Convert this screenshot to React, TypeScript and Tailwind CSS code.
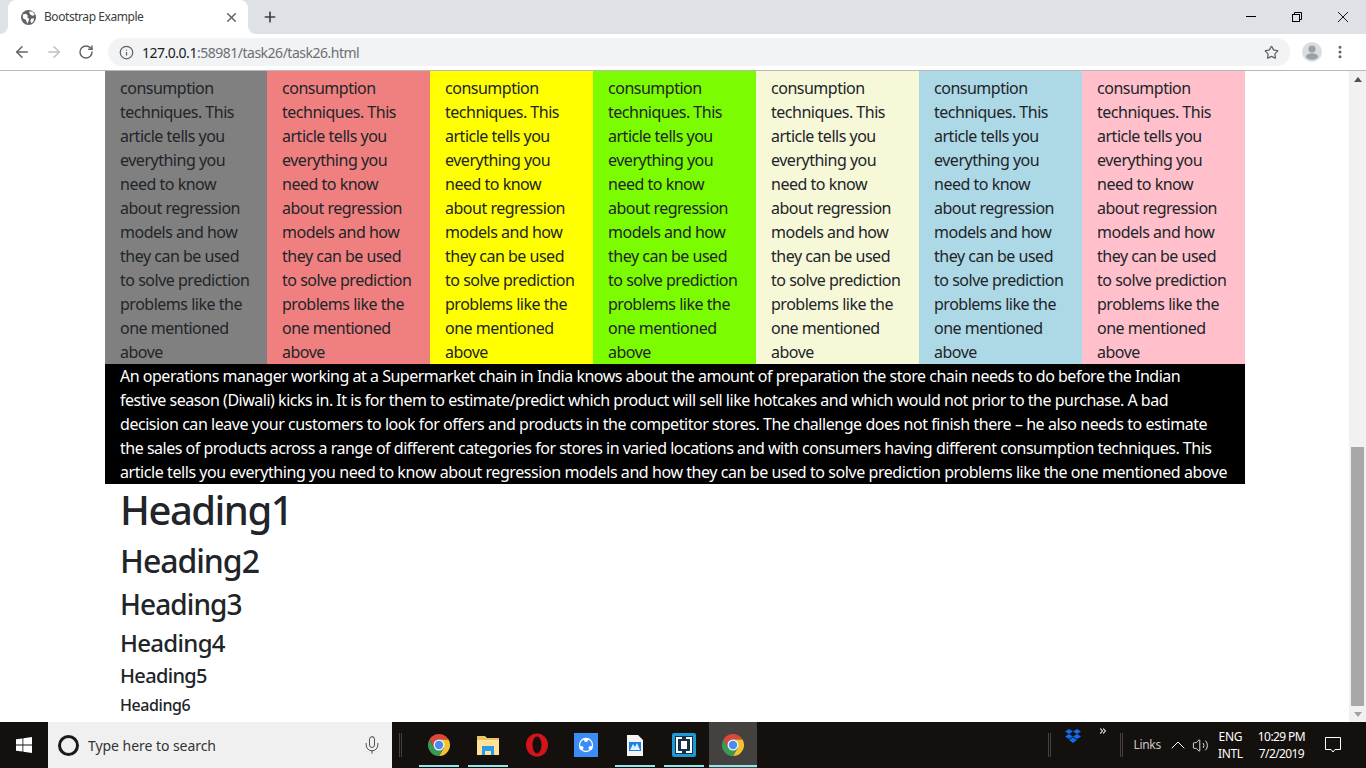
import React from 'react';
import { ArrowLeft, ArrowRight, RotateCw, Info, Star, Plus, X, MoreVertical, Mic, ChevronUp, Volume2, ChevronsRight } from 'lucide-react';

const columnLines = [
  'consumption',
  'techniques. This',
  'article tells you',
  'everything you',
  'need to know',
  'about regression',
  'models and how',
  'they can be used',
  'to solve prediction',
  'problems like the',
  'one mentioned',
  'above',
];

const columnColors = [
  'bg-[#808080] w-[162px]',
  'bg-[#f08080] w-[163px]',
  'bg-[#ffff00] w-[163px]',
  'bg-[#7cfc00] w-[163px]',
  'bg-[#f7f8d8] w-[163px]',
  'bg-[#add8e6] w-[163px]',
  'bg-[#ffc0cb] w-[163px]',
];

// each line gets its own tracking so the line ends land where they do in the picture
const blackLines = [
  { text: 'An operations manager working at a Supermarket chain in India knows about the amount of preparation the store chain needs to do before the Indian', track: 'tracking-[-0.49px]' },
  { text: 'festive season (Diwali) kicks in. It is for them to estimate/predict which product will sell like hotcakes and which would not prior to the purchase. A bad', track: 'tracking-[-0.49px]' },
  { text: 'decision can leave your customers to look for offers and products in the competitor stores. The challenge does not finish there – he also needs to estimate', track: 'tracking-[-0.45px]' },
  { text: 'the sales of products across a range of different categories for stores in varied locations and with consumers having different consumption techniques. This', track: 'tracking-[-0.49px]' },
  { text: 'article tells you everything you need to know about regression models and how they can be used to solve prediction problems like the one mentioned above', track: 'tracking-[-0.43px]' },
];

function ChromeLogo() {
  return (
    <svg width="24" height="24" viewBox="0 0 24 24">
      <path d="M21.53 6.5A11 11 0 0 0 2.47 6.5L7.24 14.75 12 6.5z" fill="#d9483b" />
      <path d="M21.53 6.5A11 11 0 0 1 12 23l4.76-8.25L12 6.5z" fill="#f2c230" />
      <path d="M12 23A11 11 0 0 1 2.47 6.5l4.77 8.25h9.52z" fill="#3a9a55" />
      <circle cx="12" cy="12" r="5.5" fill="#f4f4f4" />
      <circle cx="12" cy="12" r="4.2" fill="#4b8bf0" />
    </svg>
  );
}

function TaskbarSlot({ active, lit, children }: { active?: boolean; lit?: boolean; children: React.ReactNode }) {
  return (
    <div className={`relative flex h-[46px] items-center justify-center ${active ? '-ml-[4px] w-[48px] bg-[#45413e]' : 'w-[40px]'}`}>
      {children}
      {lit && <div className="absolute bottom-[1px] left-0 right-0 h-[2px] bg-[#8fe8ee]" />}
    </div>
  );
}

export default function App() {
  return (
    <div className="flex h-[768px] w-[1366px] flex-col overflow-hidden bg-white font-['Noto_Sans',sans-serif]">
      {/* tab strip */}
      <div className="flex h-[34px] items-end bg-[#dee1e6]">
        <div className="relative ml-[8px] flex h-[34px] w-[240px] items-center rounded-t-[8px] bg-white pl-[13px] pr-[9px]">
          <div className="absolute bottom-0 -left-[8px] h-[8px] w-[8px] bg-white">
            <div className="h-full w-full rounded-br-[8px] bg-[#dee1e6]" />
          </div>
          <div className="absolute bottom-0 -right-[8px] h-[8px] w-[8px] bg-white">
            <div className="h-full w-full rounded-bl-[8px] bg-[#dee1e6]" />
          </div>
          <svg width="15" height="15" viewBox="0 0 24 24" className="shrink-0">
            <circle cx="12" cy="12" r="12" fill="#5f6368" />
            <path d="M3 7l5-1 3 3-1 3 3 2-1 4-2 4-2-6-5-3zM14 2l5 1 3 5-4 1-3-2-2-3zM16 14l5-1-1 5-3 3-2-3z" fill="#fff" />
          </svg>
          <span className="ml-[8px] flex-1 whitespace-nowrap text-[12px] tracking-[-0.44px] text-[#3c4043]">Bootstrap Example</span>
          <X size={15} strokeWidth={2.4} className="text-[#5f6368]" />
        </div>
        <div className="ml-[14px] flex h-[34px] items-center">
          <Plus size={16} strokeWidth={2.5} className="text-[#3c4043]" />
        </div>
        <div className="flex-1" />
        <div className="flex h-[34px] items-center">
          <div className="flex w-[46px] justify-center">
            <svg width="10" height="10" viewBox="0 0 10 10" stroke="#000"><path d="M0 4.5h10" /></svg>
          </div>
          <div className="flex w-[46px] justify-center">
            <svg width="10" height="10" viewBox="0 0 10 10" fill="none" stroke="#000">
              <rect x="0.5" y="2.5" width="7" height="7" />
              <path d="M2.5 2.5V0.5h7v7H7.5" />
            </svg>
          </div>
          <div className="flex w-[46px] justify-center">
            <svg width="10" height="10" viewBox="0 0 10 10" stroke="#000" strokeWidth="0.9"><path d="M0 0l10 10M10 0L0 10" /></svg>
          </div>
        </div>
      </div>
      {/* toolbar */}
      <div className="flex h-[37px] items-center border-b border-[#b8b8b8] bg-white">
        <ArrowLeft size={18} strokeWidth={2} className="ml-[13px] text-[#5f6368]" />
        <ArrowRight size={18} strokeWidth={2} className="ml-[14px] text-[#bdc1c6]" />
        <RotateCw size={16} strokeWidth={2.2} className="ml-[15px] text-[#5f6368]" />
        <div className="ml-[14px] flex h-[28px] w-[1182px] items-center rounded-full bg-[#f1f3f4] pl-[11px] pr-[11px]">
          <Info size={15} strokeWidth={2} className="text-[#5f6368]" />
          <span className="ml-[8px] flex-1 whitespace-nowrap text-[14px] tracking-[-0.49px] text-[#6b6f74]">
            <span className="text-[#202124]">127.0.0.1</span>:58981/task26/task26.html
          </span>
          <Star size={15} strokeWidth={2} className="text-[#5f6368]" />
        </div>
        <div className="ml-[12px] flex h-[20px] w-[20px] items-center justify-center overflow-hidden rounded-full bg-[#dadce0]">
          <svg width="20" height="20" viewBox="0 0 20 20" fill="#9aa0a6">
            <circle cx="10" cy="7" r="3.5" />
            <ellipse cx="10" cy="14.5" rx="6" ry="3.2" />
          </svg>
        </div>
        <MoreVertical size={16} strokeWidth={2.5} className="ml-[10px] text-[#5f6368]" />
      </div>

      {/* page */}
      <div className="flex h-[651px] overflow-hidden">
        <div className="flex-1 overflow-hidden">
          <div className="mx-[105px] w-[1140px] text-[16px] leading-[24px] tracking-[-0.49px] text-[#212529]">
            <div className="flex h-[293px]">
              {columnColors.map((color) => (
                <div key={color} className={`${color} pl-[15px] pt-[5px]`}>
                  {columnLines.map((line) => (
                    <div key={line} className="whitespace-nowrap">{line}</div>
                  ))}
                </div>
              ))}
            </div>
            <div className="bg-black px-[15px] text-white">
              {blackLines.map((line) => (
                <div key={line.text} className={`whitespace-nowrap ${line.track}`}>{line.text}</div>
              ))}
            </div>
            <div className="px-[15px] font-medium">
              <h1 className="mb-[6px] pt-[2px] text-[40px] leading-[48px] tracking-[-1.5px]">Heading1</h1>
              <h2 className="mb-[6px] pt-[2px] text-[32px] leading-[38.4px] tracking-[-1.05px]">Heading2</h2>
              <h3 className="mb-[7px] pt-[2px] text-[28px] leading-[33.6px] tracking-[-0.9px]">Heading3</h3>
              <h4 className="mb-[6px] text-[24px] leading-[28.8px] tracking-[-0.7px]">Heading4</h4>
              <h5 className="mb-[8px] text-[20px] leading-[24px] tracking-[-0.65px]">Heading5</h5>
              <h6 className="text-[16px] leading-[19.2px] tracking-[-0.42px]">Heading6</h6>
            </div>
          </div>
        </div>
        {/* scrollbar */}
        <div className="flex w-[17px] flex-col items-center bg-[#f1f1f1]">
          <div className="mt-[6px] h-0 w-0 border-x-[4px] border-b-[5px] border-x-transparent border-b-[#505050]" />
          <div className="mt-[365px] h-[259px] w-[13px] bg-[#a8a8a8]" />
          <div className="mt-[6px] h-0 w-0 border-x-[4px] border-t-[5px] border-x-transparent border-t-[#a3a3a3]" />
        </div>
      </div>

      {/* taskbar */}
      <div className="flex h-[46px] items-center bg-[#14100e] text-white">
        <div className="flex h-[46px] w-[48px] items-center justify-center">
          <svg width="16" height="16" viewBox="0 0 16 16" fill="#fff">
            <path d="M0 2.3l6.5-.9v6.2H0zM7.3 1.3L16 0v7.6H7.3zM0 8.4h6.5v6.2L0 13.7zM7.3 8.4H16V16l-8.7-1.3z" />
          </svg>
        </div>
        <div className="flex h-[46px] w-[344px] items-center bg-[#f0f0f0] pl-[10px] pr-[10px] text-[#333]">
          <div className="h-[21px] w-[21px] rounded-full border-[3px] border-[#1a1a1a]" />
          <span className="ml-[9px] flex-1 whitespace-nowrap text-[14px] tracking-[-0.05px]">Type here to search</span>
          <Mic size={20} strokeWidth={1} />
        </div>
        <div className="ml-[7px] h-[24px] w-[3px] border-x border-[#45413e]" />
        <div className="ml-[17px] flex items-center gap-[9px]">
          <TaskbarSlot lit><ChromeLogo /></TaskbarSlot>
          <TaskbarSlot lit>
            <svg width="22" height="20" viewBox="0 0 22 20">
              <path d="M0 1h8l2 2h12v17H0z" fill="#e8c468" />
              <path d="M0 5h22v15H0z" fill="#ffe29a" />
              <path d="M5 11h12v9h-3v-4H8v4H5z" fill="#2b9be8" />
            </svg>
          </TaskbarSlot>
          <TaskbarSlot>
            <svg width="24" height="24" viewBox="0 0 24 24">
              <ellipse cx="12" cy="12" rx="11" ry="11.5" fill="#d3141c" />
              <ellipse cx="12" cy="12" rx="4.5" ry="8.5" fill="#14100e" />
            </svg>
          </TaskbarSlot>
          <TaskbarSlot>
            <svg width="24" height="24" viewBox="0 0 24 24" fill="none">
              <rect width="24" height="24" fill="#3b8cf6" />
              <circle cx="12" cy="12" r="6.5" stroke="#fff" strokeWidth="1.3" />
              <circle cx="12" cy="7" r="2" fill="#fff" />
              <circle cx="7.5" cy="15" r="2" fill="#fff" />
              <circle cx="16.5" cy="15" r="2" fill="#fff" />
            </svg>
          </TaskbarSlot>
          <TaskbarSlot lit>
            <svg width="16" height="21" viewBox="0 0 16 21">
              <path d="M0 0h11l5 5v16H0z" fill="#f4f4f4" />
              <path d="M2 7h12v9H2z" fill="#1d7fe0" />
              <path d="M3 15l3-6 2 3 2-4 3 7z" fill="#dff0ff" />
            </svg>
          </TaskbarSlot>
          <TaskbarSlot lit>
            <svg width="24" height="24" viewBox="0 0 24 24" fill="none">
              <rect width="24" height="24" rx="2" fill="#1b9ad6" />
              <rect x="3" y="3" width="18" height="18" fill="#14304a" />
              <path d="M10 5H5v14h5M14 5h5v14h-5" stroke="#fff" strokeWidth="2" />
              <rect x="9" y="8" width="6" height="8" fill="#fff" />
            </svg>
          </TaskbarSlot>
          <TaskbarSlot active lit><ChromeLogo /></TaskbarSlot>
        </div>
        <div className="flex-1" />
        <div className="h-[24px] w-[3px] border-x border-[#45413e]" />
        <div className="relative ml-[14px] flex h-[46px] w-[55px]">
          <svg width="16" height="14" viewBox="0 0 16 14" fill="#0f6df0" className="mt-[7px]">
            <path d="M4 0l4 2.5L4 5 0 2.5zM12 0l4 2.5L12 5 8 2.5zM4 5l4 2.5L4 10 0 7.5zM12 5l4 2.5-4 2.5-4-2.5zM8 8.5l4 2.5-4 3-4-3z" />
          </svg>
          <ChevronsRight size={10} strokeWidth={2.5} className="ml-[17px] mt-[4px]" />
        </div>
        <div className="h-[24px] w-[3px] border-x border-[#45413e]" />
        <span className="ml-[10px] text-[12px] tracking-[-0.3px] text-[#c8c8c8]">Links</span>
        <ChevronUp size={24} strokeWidth={1} className="ml-[5px]" />
        <Volume2 size={17} strokeWidth={1.2} className="ml-[2px]" />
        <div className="ml-[9px] flex flex-col items-center text-[12px] leading-[17px] tracking-[-0.3px]">
          <span>ENG</span>
          <span>INTL</span>
        </div>
        <div className="ml-[15px] flex flex-col items-center text-[12px] leading-[17px] tracking-[-0.6px]">
          <span>10:29 PM</span>
          <span>7/2/2019</span>
        </div>
        <svg width="16" height="16" viewBox="0 0 16 16" fill="none" stroke="#fff" strokeWidth="1" className="ml-[20px] mr-[25px]">
          <path d="M0.5 0.5h15v12H10l-2 2.5-2-2.5H0.5z" />
        </svg>
      </div>
    </div>
  );
}
